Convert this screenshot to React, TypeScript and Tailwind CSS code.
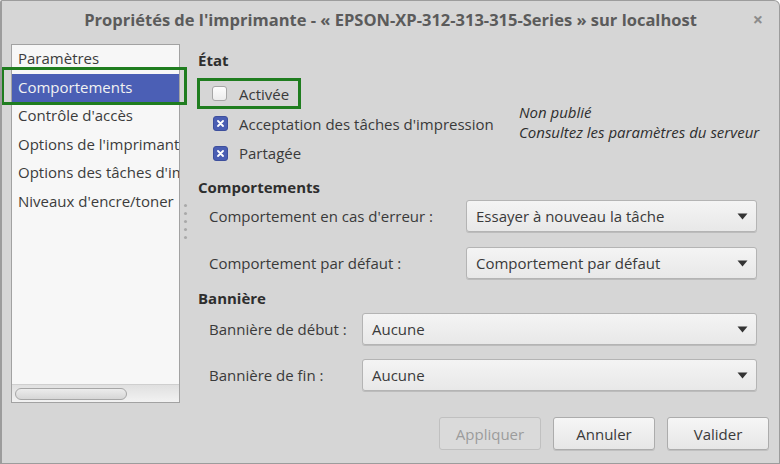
import { useState } from "react";

const FONT = { fontFamily: '"Open Sans", "Noto Sans", sans-serif' };

const SIDEBAR_ITEMS = [
  "Paramètres",
  "Comportements",
  "Contrôle d'accès",
  "Options de l'imprimante",
  "Options des tâches d'impression",
  "Niveaux d'encre/toner",
];

function Arrow() {
  return (
    <svg width="11" height="7" viewBox="0 0 11 7" className="shrink-0">
      <path d="M0.5 0.5 L10.5 0.5 L5.5 6.5 Z" fill="#333" />
    </svg>
  );
}

function Combo({ value }: { value: string }) {
  return (
    <div className="flex-1 h-[32px] flex items-center justify-between pl-[9px] pr-[8px] rounded-[3px] border border-[#b4b4b4] bg-gradient-to-b from-[#f4f4f4] to-[#e8e8e8] shadow-[0_1px_0_rgba(0,0,0,0.12)] text-[15px] text-[#3a3a3a]">
      <span>{value}</span>
      <Arrow />
    </div>
  );
}

function CheckBox({ checked }: { checked: boolean }) {
  if (checked) {
    return (
      <div className="w-[15px] h-[15px] rounded-[3px] bg-[#4a5eb3] border border-[#3d4f9c] flex items-center justify-center shrink-0">
        <svg width="7" height="7" viewBox="0 0 7 7">
          <path d="M1 1 L6 6 M6 1 L1 6" stroke="#fff" strokeWidth="1.8" strokeLinecap="round" />
        </svg>
      </div>
    );
  }
  return (
    <div className="w-[15px] h-[15px] rounded-[3px] bg-gradient-to-b from-[#fdfdfd] to-[#ececec] border border-[#a6a6a6] shrink-0" />
  );
}

function Button({ label, disabled }: { label: string; disabled?: boolean }) {
  return (
    <div
      className={`w-[102px] h-[33px] flex items-center justify-center rounded-[3px] border text-[15px] ${
        disabled
          ? "border-[#c0c0c0] bg-[#dadada] text-[#9c9c9c]"
          : "border-[#acacac] bg-gradient-to-b from-[#f6f6f6] to-[#e6e6e6] text-[#3a3a3a] shadow-[0_1px_0_rgba(0,0,0,0.1)]"
      }`}
    >
      {label}
    </div>
  );
}

export default function App() {
  const [selected] = useState(1);

  return (
    <div
      className="w-[780px] h-[464px] bg-[#d6d6d6] border border-[#9c9c9c] border-l-[2px] rounded-tr-[6px] rounded-tl-[2px] flex flex-col overflow-hidden leading-[20px]"
      style={FONT}
    >
      {/* Title bar */}
      <div className="relative h-[37px] shrink-0 flex items-center justify-center">
        <span className="text-[16.5px] font-bold text-[#5b5b5b]">
          Propriétés de l'imprimante - « EPSON-XP-312-313-315-Series » sur localhost
        </span>
        <span className="absolute right-[16px] top-[9px] text-[18px] font-bold text-[#8c8c8c] leading-none">
          ×
        </span>
      </div>

      <div className="flex flex-1">
        {/* Sidebar */}
        <div className="pl-[9px] pt-[6px] shrink-0">
          <div className="relative w-[169px] h-[359px] bg-[#f7f7f7] border border-[#a2a2a2] flex flex-col overflow-hidden">
            {SIDEBAR_ITEMS.map((item, i) => (
              <div
                key={item}
                className={`h-[28.5px] shrink-0 flex items-center pl-[6px] pb-[2px] whitespace-nowrap text-[15px] ${
                  i === selected ? "bg-[#4b5fb5] text-[#f2f2f2]" : "text-[#3c3c3c]"
                }`}
              >
                {item}
              </div>
            ))}
            <div className="flex-1" />
            <div className="h-[18px] shrink-0 border-t border-[#cfcfcf] bg-gradient-to-b from-[#e0e0e0] to-[#f2f2f2] flex items-center px-[3px]">
              <div className="w-[112px] h-[12px] rounded-full border border-[#a6a6a6] bg-gradient-to-b from-[#ececec] to-[#d6d6d6]" />
            </div>
          </div>
        </div>
        {/* Sidebar selection highlight */}
        <div className="relative w-0">
          <div className="absolute left-[-179px] top-[29px] w-[186px] h-[38px] border-[3px] border-[#1f7d1f]" />
        </div>

        {/* Paned handle */}
        <div className="w-[18px] shrink-0 flex flex-col items-center justify-center gap-[5px] pb-[58px] pl-[4px] pr-[12px]">
          {[0, 1, 2, 3, 4].map((d) => (
            <div key={d} className="w-[3px] h-[3px] rounded-full bg-[#a9a9a9]" />
          ))}
        </div>

        {/* Content */}
        <div className="flex-1 flex flex-col pt-[12px] pr-[10px] text-[#3a3a3a]">
          <div className="h-[20px] flex items-center text-[15px] font-bold text-[#2e2e2e]">État</div>

          <div className="flex mt-[8px]">
            <div className="w-[321px] flex flex-col">
              <div className="ml-[-1px] w-[104px] h-[31px] border-[3px] border-[#1f7d1f] flex items-center pl-[12px] gap-[12px] text-[15px]">
                <CheckBox checked={false} />
                <span>Activée</span>
              </div>
              <div className="h-[29px] flex items-center pl-[15px] gap-[11px] text-[15px] whitespace-nowrap">
                <CheckBox checked />
                <span>Acceptation des tâches d'impression</span>
              </div>
              <div className="h-[30px] flex items-center pl-[15px] gap-[11px] text-[15px]">
                <CheckBox checked />
                <span>Partagée</span>
              </div>
            </div>
            <div className="pt-[24px] flex flex-col text-[15px] italic text-[#2e2e2e] leading-[20px] whitespace-nowrap">
              <span>Non publié</span>
              <span>Consultez les paramètres du serveur</span>
            </div>
          </div>

          <div className="h-[20px] mt-[9px] flex items-center text-[15px] font-bold text-[#2e2e2e]">Comportements</div>

          <div className="flex items-center mt-[3px] pl-[11px] pr-[12px] text-[15px]">
            <span className="w-[257px] shrink-0">Comportement en cas d'erreur :</span>
            <Combo value="Essayer à nouveau la tâche" />
          </div>
          <div className="flex items-center mt-[15px] pl-[11px] pr-[12px] text-[15px]">
            <span className="w-[257px] shrink-0">Comportement par défaut :</span>
            <Combo value="Comportement par défaut" />
          </div>

          <div className="h-[20px] mt-[9px] flex items-center text-[15px] font-bold text-[#2e2e2e]">Bannière</div>

          <div className="flex items-center mt-[5px] pl-[11px] pr-[12px] text-[15px]">
            <span className="w-[153px] shrink-0">Bannière de début :</span>
            <Combo value="Aucune" />
          </div>
          <div className="flex items-center mt-[14px] pl-[11px] pr-[12px] text-[15px]">
            <span className="w-[153px] shrink-0">Bannière de fin :</span>
            <Combo value="Aucune" />
          </div>

          <div className="flex justify-end gap-[12px] mt-[26px]">
            <Button label="Appliquer" disabled />
            <Button label="Annuler" />
            <Button label="Valider" />
          </div>
        </div>
      </div>
    </div>
  );
}
